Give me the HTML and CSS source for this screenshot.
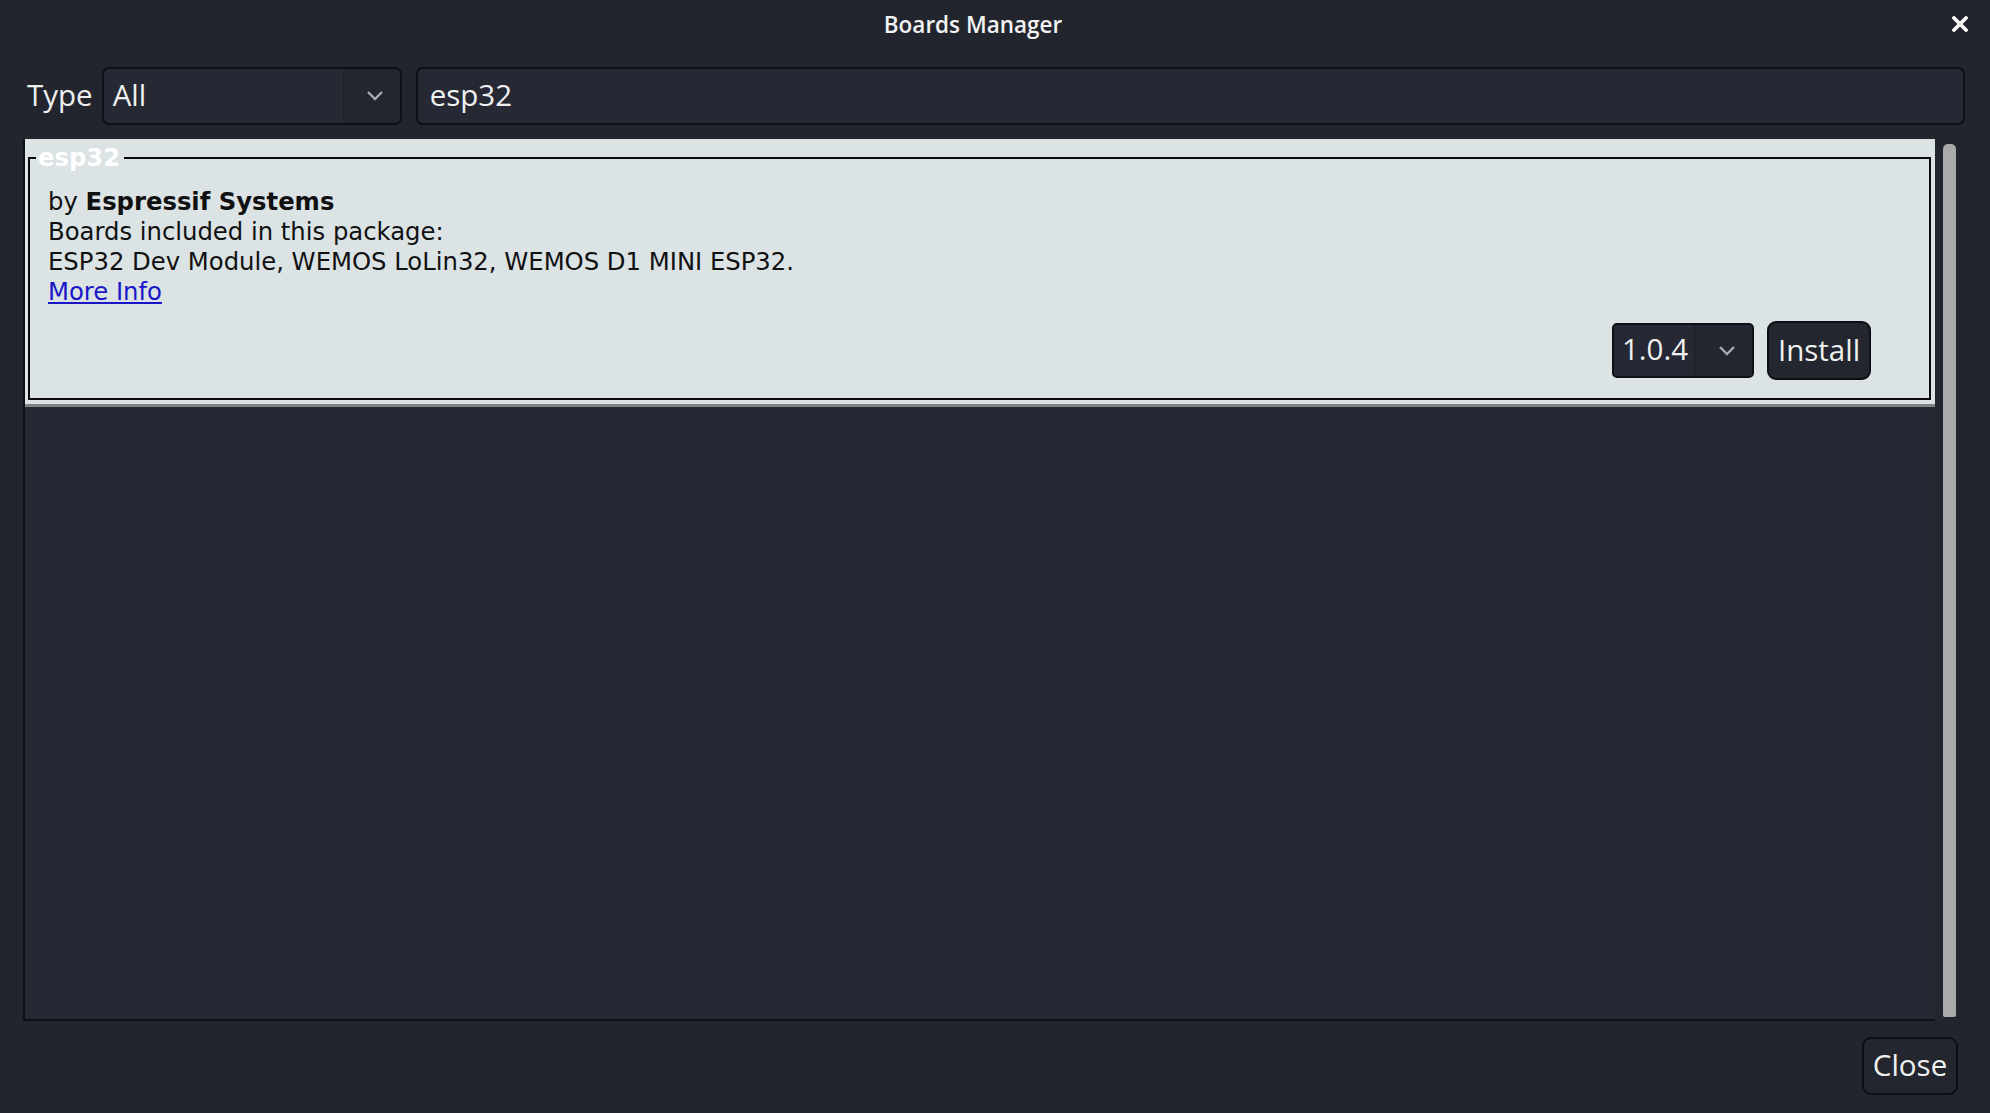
FILE: index.html
```html
<!DOCTYPE html>
<html>
<head>
<meta charset="utf-8">
<link rel="stylesheet" href="styles.css">
</head>
<body>
<div class="dialog">
  <header class="titlebar">
    <span></span>
    <span class="title">Boards Manager</span>
    <span class="close-x">
      <svg width="16" height="16" viewBox="0 0 16 16"><path d="M2 2 L14 14 M14 2 L2 14" stroke="#ffffff" stroke-width="3.6" stroke-linecap="square"/></svg>
    </span>
  </header>
  <div class="toolbar">
    <span class="label">Type</span>
    <div class="combo type-combo">
      <span class="combo-value">All</span>
      <span class="combo-arrow">
        <svg width="18" height="12" viewBox="0 0 18 12"><path d="M2 2 L9 9 L16 2" fill="none" stroke="#a9abb0" stroke-width="2.4"/></svg>
      </span>
    </div>
    <div class="search">esp32</div>
  </div>
  <div class="content">
    <div class="list">
      <div class="card">
        <fieldset class="frame">
          <legend class="frame-title">esp32</legend>
          <div class="line">by <b>Espressif Systems</b></div>
          <div class="line">Boards included in this package:</div>
          <div class="line">ESP32 Dev Module, WEMOS LoLin32, WEMOS D1 MINI ESP32.</div>
          <div class="line"><a class="more" href="#">More Info</a></div>
          <div class="actions">
            <div class="combo ver-combo">
              <span class="combo-value">1.0.4</span>
              <span class="combo-arrow">
                <svg width="18" height="12" viewBox="0 0 18 12"><path d="M2 2 L9 9 L16 2" fill="none" stroke="#a9abb0" stroke-width="2.4"/></svg>
              </span>
            </div>
            <button class="btn install">Install</button>
          </div>
        </fieldset>
      </div>
    </div>
    <div class="scrollbar"><div class="thumb"></div></div>
  </div>
  <footer class="footer">
    <button class="btn close">Close</button>
  </footer>
</div>
</body>
</html>
```
FILE: styles.css
```css
html, body {
  margin: 0;
  padding: 0;
  background: #22252e;
}
.dialog {
  width: 1990px;
  height: 1113px;
  display: flex;
  flex-direction: column;
  background: #22252e;
  color: #ffffff;
  font-family: "Open Sans", "Noto Sans", sans-serif;
  overflow: hidden;
}
.titlebar {
  height: 50px;
  display: grid;
  grid-template-columns: 1fr auto 1fr;
  align-items: center;
  padding: 0 22px 0 0;
}
.title {
  font-size: 22.5px;
  font-weight: 600;
  color: #f2f2f2;
  margin-top: -2px;
  padding-right: 22px;
}
.close-x {
  justify-self: end;
  display: flex;
  margin-top: -2px;
}
.toolbar {
  margin-top: 17px;
  height: 58px;
  display: flex;
  align-items: stretch;
  padding: 0 25px 0 27px;
}
.label {
  font-size: 29.5px;
  font-weight: 370;
  color: #eeeeee;
  display: flex;
  align-items: center;
  margin-right: 9px;
  padding-bottom: 4px;
}
.combo {
  display: flex;
  align-items: stretch;
  background: #262934;
  border: 2px solid #0e1017;
  border-radius: 7px;
  box-sizing: border-box;
  overflow: hidden;
}
.type-combo {
  width: 300px;
  margin-right: 14px;
}
.combo-value {
  flex: 1;
  display: flex;
  align-items: center;
  font-size: 29.5px;
  font-weight: 370;
  color: #f0f0f0;
  padding-left: 9px;
  padding-bottom: 4px;
}
.combo-arrow {
  width: 57px;
  display: flex;
  align-items: center;
  justify-content: center;
  padding-left: 6px;
  box-sizing: border-box;
  background: #23262f;
  border-left: 1px solid #1c1e26;
}
.search {
  flex: 1;
  display: flex;
  align-items: center;
  background: #262934;
  border: 2px solid #0e1017;
  border-radius: 7px;
  font-size: 29.5px;
  font-weight: 370;
  color: #f0f0f0;
  padding-left: 12px;
  padding-bottom: 4px;
}
.content {
  margin-top: 14px;
  height: 882px;
  display: flex;
  padding: 0 34px 0 23px;
}
.list {
  flex: 1;
  background: #262934;
  border-left: 2px solid #0e1017;
  border-bottom: 2px solid #0e1017;
  box-sizing: border-box;
}
.card {
  background: #dbe3e5;
  padding: 0 4px 4px 3px;
  border-bottom: 3px solid #7f8388;
}
.frame {
  margin: 0;
  border: 2px solid #0b0b0d;
  padding: 10px 18px 18px 18px;
  color: #111111;
  font-family: "DejaVu Sans", sans-serif;
  font-size: 24.3px;
}
.frame-title {
  font-family: "DejaVu Sans", sans-serif;
  font-weight: bold;
  font-size: 24.3px;
  line-height: 38px;
  color: #ffffff;
  padding: 0 4px 0 2px;
  margin-left: -12px;
}
.line {
  line-height: 30px;
  height: 30px;
  white-space: nowrap;
}
.line b {
  font-weight: bold;
}
.more {
  color: #1a16c8;
  text-decoration: underline;
}
.actions {
  display: flex;
  justify-content: flex-end;
  align-items: center;
  gap: 13px;
  padding-right: 40px;
  margin-top: 14px;
}
.ver-combo {
  width: 142px;
  height: 55px;
  border-radius: 5px;
}
.ver-combo .combo-value {
  padding-left: 8px;
  font-family: "Open Sans", "Noto Sans", sans-serif;
}
.ver-combo .combo-arrow {
  width: 58px;
}
.btn {
  font-family: "Open Sans", "Noto Sans", sans-serif;
  font-size: 29.5px;
  font-weight: 370;
  color: #f0f0f0;
  background: #23262f;
  border: 2px solid #0c0e14;
  border-radius: 9px;
  padding: 0 0 3px 0;
  box-sizing: border-box;
}
.install {
  width: 104px;
  height: 59px;
}
.scrollbar {
  width: 13px;
  margin-left: 8px;
  padding: 5px 0 4px;
  box-sizing: border-box;
  display: flex;
}
.thumb {
  flex: 1;
  background: #a9abab;
  border-radius: 5px 5px 2px 2px;
}
.footer {
  display: flex;
  justify-content: flex-end;
  padding: 16px 32px 0 0;
}
.close {
  width: 96px;
  height: 58px;
}
```
